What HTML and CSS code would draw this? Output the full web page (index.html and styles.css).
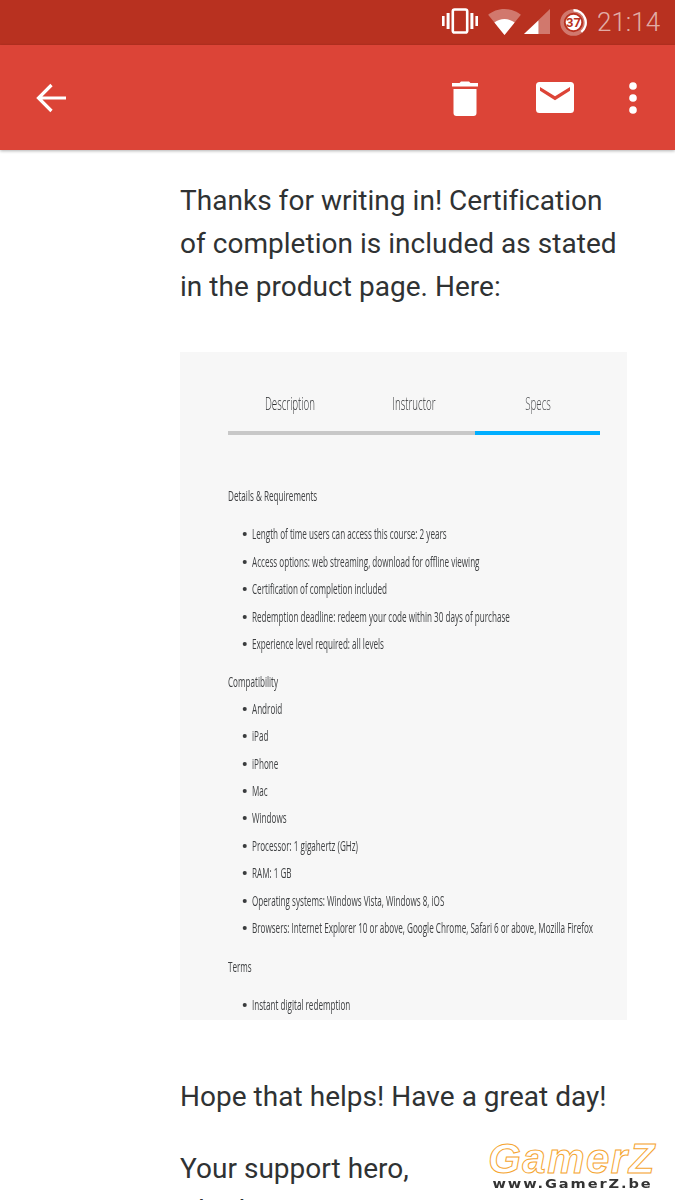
FILE: index.html
```html
<!DOCTYPE html>
<html lang="en">
<head>
<meta charset="utf-8">
<title>Email</title>
<link rel="stylesheet" href="styles.css">
</head>
<body>
<div class="phone">
  <header class="status">
    <svg class="ic-vibrate" viewBox="0 0 36 26" width="36" height="26"><path fill="#fff" d="M0 8h2.600v10H0zM4.600 5h3v16h-3zM28.400 5h3v16h-3zM33.400 8H36v10h-2.600z"/><rect x="10.800" y="1.500" width="14.400" height="23" rx="1.800" fill="none" stroke="#fff" stroke-width="2.600"/></svg>
    <svg class="ic-wifi" viewBox="0 0 34 27" width="33" height="26"><path fill="#fff" fill-opacity=".35" d="M17 0C10 0 4.500 2.400 0 6l17 21L34 6C29.500 2.400 24 0 17 0z"/><path fill="#fff" d="M6.500 14 17 27l10.500-13C24.500 11.700 21 10.400 17 10.400S9.500 11.700 6.500 14z"/></svg>
    <svg class="ic-signal" viewBox="0 0 27 27" width="26" height="26"><path fill="#fff" fill-opacity=".35" d="M27 0v26H0z"/><path fill="#fff" d="M15 12 0 26h15z"/></svg>
    <svg class="ic-battery" viewBox="0 0 27 27" width="27" height="27"><circle cx="13.500" cy="13.500" r="11.500" fill="none" stroke="#fff" stroke-opacity=".35" stroke-width="3.600"/><path d="M13.500 1.300a12.200 12.200 0 0 1 7.800 21.600" fill="none" stroke="#fff" stroke-width="2.400"/><circle cx="13.500" cy="13.500" r="7.800" fill="#fff"/><text x="13.500" y="18" class="batt-text">37</text></svg>
    <span class="clock">21:14</span>
  </header>
  <nav class="toolbar">
    <svg class="ic-back" viewBox="0 0 32 30" width="32" height="30"><path d="M30 15H3M15.500 2 2.500 15l13 13" fill="none" stroke="#fff" stroke-width="3.200"/></svg>
    <svg class="ic-trash" viewBox="0 0 28 36" width="28" height="36"><path fill="#fff" d="M10 1.500h8l1.500 1.500H27v3.500H1V3h7.500zM2.500 9h23v24a3 3 0 0 1-3 3h-17a3 3 0 0 1-3-3z"/></svg>
    <svg class="ic-mail" viewBox="0 0 38 31" width="38" height="31"><path fill="#fff" fill-rule="evenodd" d="M3.500 0h31A3.500 3.500 0 0 1 38 3.500v24a3.500 3.500 0 0 1-3.500 3.500h-31A3.500 3.500 0 0 1 0 27.500v-24A3.500 3.500 0 0 1 3.500 0zM4 5v3.800l15 9.500 15-9.500V5L19 14.200z"/></svg>
    <svg class="ic-more" viewBox="0 0 8 32" width="8" height="32"><circle cx="4" cy="4" r="3.800" fill="#fff"/><circle cx="4" cy="16" r="3.800" fill="#fff"/><circle cx="4" cy="28" r="3.800" fill="#fff"/></svg>
  </nav>
  <main class="message">
    <p class="intro">Thanks for writing in! Certification of completion is included as stated in the product page. Here:</p>
    <figure class="shot">
      <div class="tabs">
        <span class="tab">Description</span>
        <span class="tab">Instructor</span>
        <span class="tab tab-on">Specs</span>
      </div>
      <div class="rule"><i class="rule-on"></i></div>
      <h4 class="sec sec-first">Details &amp; Requirements</h4>
      <ul class="items items-first">
        <li>Length of time users can access this course: 2 years</li>
        <li>Access options: web streaming, download for offline viewing</li>
        <li>Certification of completion included</li>
        <li>Redemption deadline: redeem your code within 30 days of purchase</li>
        <li>Experience level required: all levels</li>
      </ul>
      <h4 class="sec">Compatibility</h4>
      <ul class="items items-second">
        <li>Android</li>
        <li>iPad</li>
        <li>iPhone</li>
        <li>Mac</li>
        <li>Windows</li>
        <li>Processor: 1 gigahertz (GHz)</li>
        <li>RAM: 1 GB</li>
        <li>Operating systems: Windows Vista, Windows 8, iOS</li>
        <li>Browsers: Internet Explorer 10 or above, Google Chrome, Safari 6 or above, Mozilla Firefox</li>
      </ul>
      <h4 class="sec sec-terms">Terms</h4>
      <ul class="items items-first">
        <li>Instant digital redemption</li>
      </ul>
    </figure>
    <p class="outro">Hope that helps! Have a great day!</p>
    <p class="sign">Your support hero,</p>
    <p class="sign-name">Charlie</p>
  </main>
  <div class="mark">
    <span class="mark-logo">GamerZ</span>
    <span class="mark-url">www.GamerZ.be</span>
  </div>
</div>
</body>
</html>
```
FILE: styles.css
```css
* { box-sizing: border-box; }
html, body { margin: 0; padding: 0; }
body { background: #fff; font-family: Roboto, "Liberation Sans", sans-serif; }
.phone { position: relative; width: 675px; height: 1200px; overflow: hidden; background: #fff; }

.status { height: 45px; background: #b83120; display: flex; align-items: center; padding-left: 442px; }
.ic-vibrate { margin-top: -3px; }
.ic-wifi { margin-left: 10px; margin-top: -1px; }
.ic-signal { margin-left: 3px; margin-top: -1px; }
.ic-battery { margin-left: 10px; margin-top: -1px; }
.batt-text { font: 700 13px Roboto, sans-serif; fill: #b83120; text-anchor: middle; }
.clock { margin-left: 10px; font-size: 26px; font-weight: 300; color: rgba(255,255,255,.62); line-height: 1; margin-top: -1px; }

.toolbar { height: 105px; background: #dc4437; display: flex; align-items: center; box-shadow: 0 1px 3px rgba(0,0,0,.3); position: relative; }
.ic-back { margin-left: 36px; margin-right: auto; }
.ic-trash { margin-right: 57px; }
.ic-mail { margin-right: 55px; }
.ic-more { margin-right: 38px; }

.message { padding: 29px 48px 0 180px; color: #2f3233; }
.message p { margin: 0; font-size: 28px; line-height: 43px; letter-spacing: .03px; }
.intro { width: 447px; }
.shot { margin: 44px 0 0; width: 447px; height: 668px; background: #f7f7f7; overflow: hidden; padding: 36px 27px 0 48px; color: #3f4143; font-family: "Open Sans", sans-serif; font-weight: 400; filter: blur(.35px); }
.tabs { display: grid; grid-template-columns: repeat(3, 124px); height: 32px; }
.tab { text-align: center; font-size: 18px; font-weight: 300; line-height: 30px; color: #2c2e30; transform: scaleX(.54); white-space: nowrap; }
.tab-on { color: #4c4e50; }
.rule { height: 4px; width: 372px; margin-top: 11px; background: #c8c8c8; display: flex; justify-content: flex-end; }
.rule-on { display: block; width: 125px; background: #00aeff; }
.sec { margin: 0; font-size: 14px; font-weight: 400; line-height: 27.400px; white-space: nowrap; transform: scaleX(.58); transform-origin: left center; }
.sec-first { margin-top: 47px; }
.sec-terms { margin-top: 11px; }
.items { list-style: none; margin: 0 0 0 24px; padding: 0; font-size: 14px; line-height: 27.400px; }
.items-first { margin-top: 11px; margin-bottom: 11px; }
.items-second { margin-top: -1px; }
.items li { position: relative; white-space: nowrap; transform: scaleX(.58); transform-origin: left center; }
.items li::before { content: ""; position: absolute; left: -16px; top: 12px; width: 6.500px; height: 4px; border-radius: 50%; background: #3a3c3e; }

.message .outro { margin-top: 55px; }
.message .sign { margin-top: 29px; }
.message .sign-name { margin-top: -1px; }

.mark { position: absolute; left: 484px; top: 1141px; width: 176px; display: flex; flex-direction: column; align-items: center; }
.mark-logo { font-family: "Liberation Sans", sans-serif; font-size: 42px; font-weight: 700; font-style: italic; line-height: 36px; letter-spacing: 1.500px; color: #fff; -webkit-text-stroke: 1px #f5a530; }
.mark-url { font-family: "DejaVu Sans", sans-serif; font-size: 13px; font-weight: 700; line-height: 14px; letter-spacing: 1.700px; color: #333; transform: scaleX(1.12); }
```
